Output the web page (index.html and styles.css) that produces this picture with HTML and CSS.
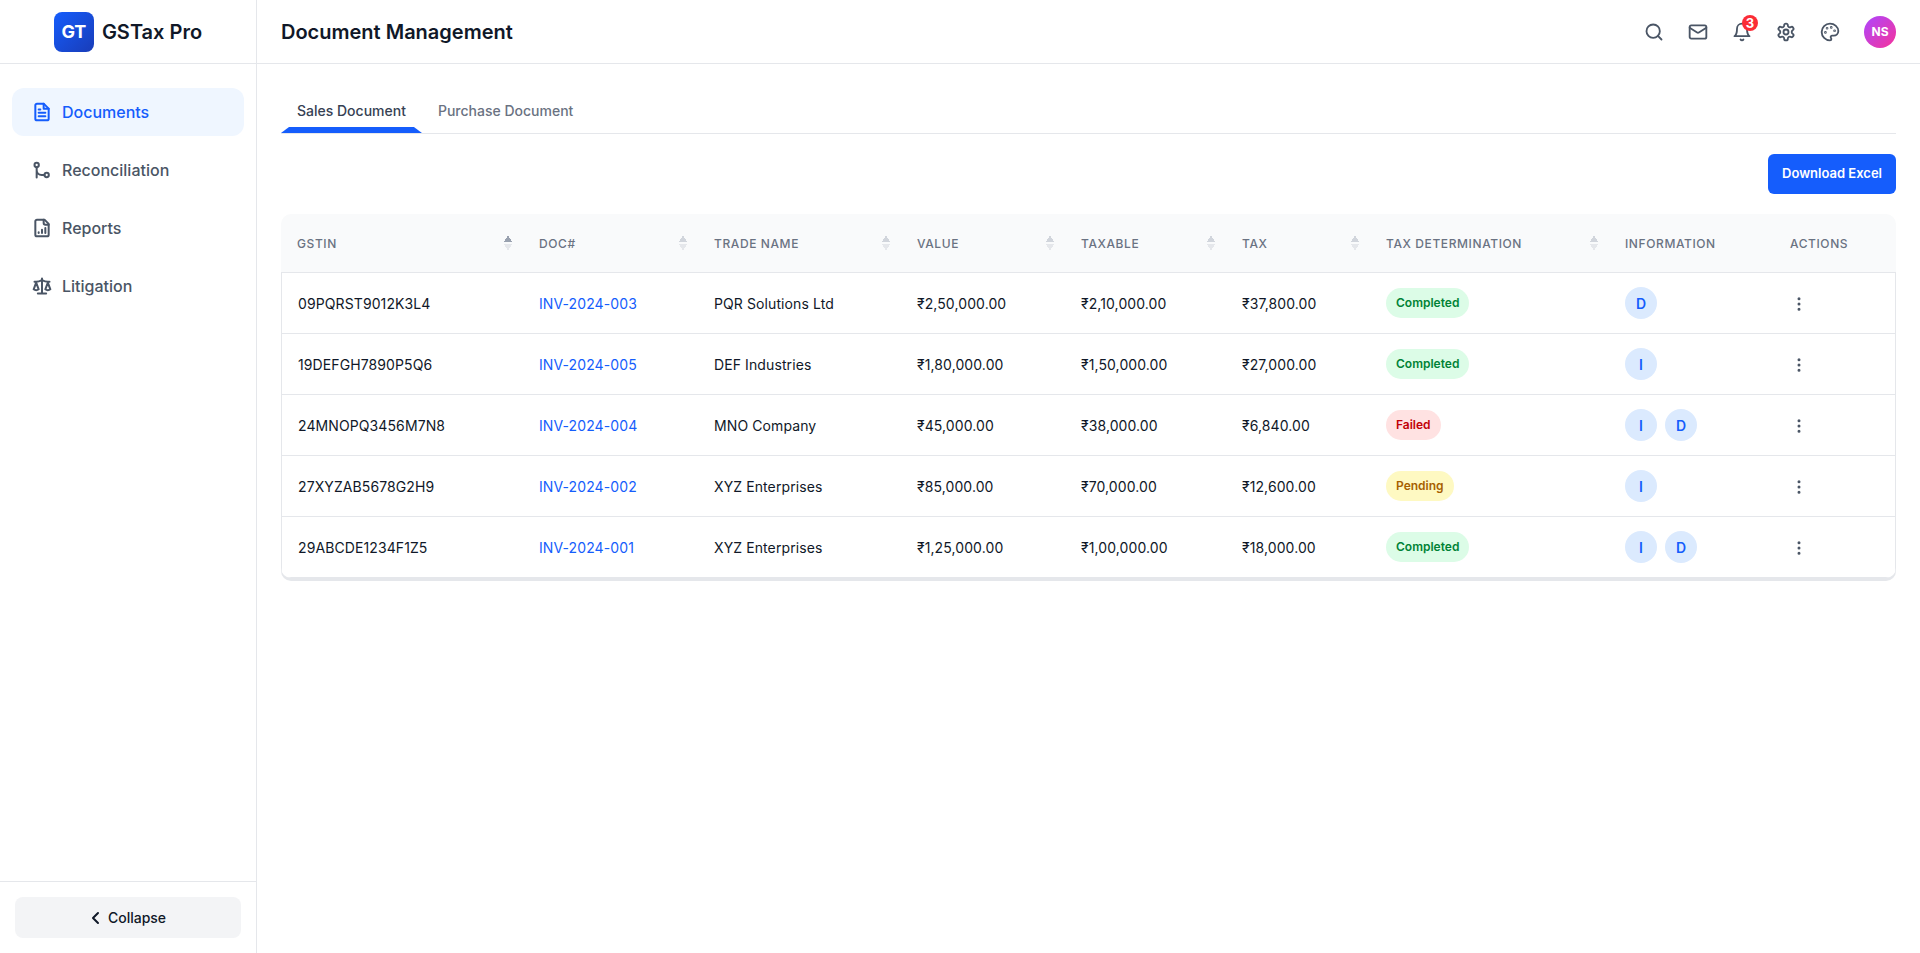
FILE: index.html
```html
<!DOCTYPE html>
<html>
<head>
  <title>GSTax Pro - Document Management</title>
  <link rel="stylesheet" href="styles.css">
</head>
<body>
  <div class="app">
    <aside class="sidebar">
      <div class="brand">
        <div class="brand-logo">GT</div>
        <span class="brand-name">GSTax Pro</span>
      </div>
      <nav class="nav">
        <a class="nav-item active">
          <svg class="nav-icon" viewBox="0 0 24 24"><path d="M14 2H6a2 2 0 0 0-2 2v16a2 2 0 0 0 2 2h12a2 2 0 0 0 2-2V8z"/><path d="M14 2v6h6"/><path d="M16 13H8M16 17H8M10 9H8"/></svg>
          Documents
        </a>
        <a class="nav-item">
          <svg class="nav-icon" viewBox="0 0 24 24"><circle cx="5.600" cy="6" r="2.600"/><circle cx="17.600" cy="18" r="2.600"/><path d="M5.600 8.600V21M5.600 12c0 3.500 2.500 6 6 6h3.400"/></svg>
          Reconciliation
        </a>
        <a class="nav-item">
          <svg class="nav-icon" viewBox="0 0 24 24"><path d="M15 2H6a2 2 0 0 0-2 2v16a2 2 0 0 0 2 2h12a2 2 0 0 0 2-2V7z"/><path d="M14 2v4a2 2 0 0 0 2 2h4"/><path d="M8 18v-1M12 18v-4M16 18v-6"/></svg>
          Reports
        </a>
        <a class="nav-item">
          <svg class="nav-icon" viewBox="0 0 24 24"><path d="m16 16 3-8 3 8c-.9.700-1.900 1-3 1s-2.100-.300-3-1z"/><path d="m2 16 3-8 3 8c-.9.700-1.900 1-3 1s-2.100-.300-3-1z"/><path d="M7 21h10M12 3v18M3 7h2c2 0 5-1 7-2 2 1 5 2 7 2h2"/></svg>
          Litigation
        </a>
      </nav>
      <div class="sidebar-foot">
        <button class="collapse-btn">
          <svg class="collapse-icon" viewBox="0 0 10 16"><path d="M8 3 3 8l5 5"/></svg>
          Collapse
        </button>
      </div>
    </aside>

    <div class="main">
      <header class="topbar">
        <h1>Document Management</h1>
        <div class="top-actions">
          <svg class="top-icon" viewBox="0 0 24 24"><circle cx="11" cy="11" r="8"/><path d="m21 21-4.300-4.300"/></svg>
          <svg class="top-icon" viewBox="0 0 24 24"><rect x="2" y="4" width="20" height="16" rx="2"/><path d="m22 7-8.970 5.700a1.940 1.940 0 0 1-2.060 0L2 7"/></svg>
          <span class="bell">
            <svg class="top-icon" viewBox="0 0 24 24"><path d="M6 8a6 6 0 0 1 12 0c0 7 3 9 3 9H3s3-2 3-9"/><path d="M10.300 21a1.940 1.940 0 0 0 3.400 0"/></svg>
            <span class="bell-count">3</span>
          </span>
          <svg class="top-icon" viewBox="0 0 24 24"><path d="M12.220 2h-.44a2 2 0 0 0-2 2v.18a2 2 0 0 1-1 1.730l-.43.25a2 2 0 0 1-2 0l-.15-.08a2 2 0 0 0-2.730.73l-.22.380a2 2 0 0 0 .730 2.730l.15.100a2 2 0 0 1 1 1.720v.510a2 2 0 0 1-1 1.740l-.15.090a2 2 0 0 0-.730 2.730l.22.380a2 2 0 0 0 2.730.730l.15-.08a2 2 0 0 1 2 0l.43.250a2 2 0 0 1 1 1.730V20a2 2 0 0 0 2 2h.44a2 2 0 0 0 2-2v-.18a2 2 0 0 1 1-1.730l.43-.25a2 2 0 0 1 2 0l.15.080a2 2 0 0 0 2.730-.730l.22-.390a2 2 0 0 0-.730-2.730l-.15-.080a2 2 0 0 1-1-1.740v-.500a2 2 0 0 1 1-1.740l.15-.090a2 2 0 0 0 .730-2.730l-.22-.380a2 2 0 0 0-2.730-.730l-.15.080a2 2 0 0 1-2 0l-.43-.250a2 2 0 0 1-1-1.730V4a2 2 0 0 0-2-2z"/><circle cx="12" cy="12" r="3"/></svg>
          <svg class="top-icon" viewBox="0 0 24 24"><circle class="dot" cx="13.500" cy="6.500" r=".5"/><circle class="dot" cx="17.500" cy="10.500" r=".5"/><circle class="dot" cx="8.500" cy="7.500" r=".5"/><circle class="dot" cx="6.500" cy="12.500" r=".5"/><path d="M12 2C6.500 2 2 6.500 2 12s4.500 10 10 10c.926 0 1.648-.746 1.648-1.688 0-.437-.18-.835-.437-1.125-.29-.289-.438-.652-.438-1.125a1.640 1.640 0 0 1 1.668-1.668h1.996c3.051 0 5.555-2.503 5.555-5.554C21.965 6.012 17.461 2 12 2z"/></svg>
          <div class="avatar">NS</div>
        </div>
      </header>

      <main class="content">
        <div class="tabs">
          <a class="tab active">Sales Document</a>
          <a class="tab">Purchase Document</a>
        </div>

        <div class="toolbar">
          <button class="btn-primary">Download Excel</button>
        </div>

        <div class="table-card">
          <table class="doc-table">
            <colgroup>
              <col class="col-gstin"><col class="col-doc"><col class="col-trade"><col class="col-value"><col class="col-taxable"><col class="col-tax"><col class="col-det"><col class="col-info"><col class="col-actions">
            </colgroup>
            <thead>
              <tr>
                <th><div class="th-inner">GSTIN<span class="sort asc"></span></div></th>
                <th><div class="th-inner">DOC#<span class="sort"></span></div></th>
                <th><div class="th-inner">TRADE NAME<span class="sort"></span></div></th>
                <th><div class="th-inner">VALUE<span class="sort"></span></div></th>
                <th><div class="th-inner">TAXABLE<span class="sort"></span></div></th>
                <th><div class="th-inner">TAX<span class="sort"></span></div></th>
                <th><div class="th-inner">TAX DETERMINATION<span class="sort"></span></div></th>
                <th>INFORMATION</th>
                <th>ACTIONS</th>
              </tr>
            </thead>
            <tbody id="doc-body"></tbody>
          </table>
        </div>
      </main>
    </div>
  </div>

  <script>
    var documentos = [
      { gstin: "09PQRST9012K3L4", doc: "INV-2024-003", nome: "PQR Solutions Ltd", valor: "₹2,50,000.00", taxable: "₹2,10,000.00", tax: "₹37,800.00", status: "Completed", info: ["D"] },
      { gstin: "19DEFGH7890P5Q6", doc: "INV-2024-005", nome: "DEF Industries", valor: "₹1,80,000.00", taxable: "₹1,50,000.00", tax: "₹27,000.00", status: "Completed", info: ["I"] },
      { gstin: "24MNOPQ3456M7N8", doc: "INV-2024-004", nome: "MNO Company", valor: "₹45,000.00", taxable: "₹38,000.00", tax: "₹6,840.00", status: "Failed", info: ["I", "D"] },
      { gstin: "27XYZAB5678G2H9", doc: "INV-2024-002", nome: "XYZ Enterprises", valor: "₹85,000.00", taxable: "₹70,000.00", tax: "₹12,600.00", status: "Pending", info: ["I"] },
      { gstin: "29ABCDE1234F1Z5", doc: "INV-2024-001", nome: "XYZ Enterprises", valor: "₹1,25,000.00", taxable: "₹1,00,000.00", tax: "₹18,000.00", status: "Completed", info: ["I", "D"] }
    ];

    var body = document.getElementById("doc-body");

    documentos.forEach(function(d) {
      var chips = d.info.map(function(i) {
        return '<span class="chip">' + i + '</span>';
      }).join("");
      var row = document.createElement("tr");
      row.innerHTML =
        "<td>" + d.gstin + "</td>" +
        '<td><a class="doc-link">' + d.doc + "</a></td>" +
        "<td>" + d.nome + "</td>" +
        "<td>" + d.valor + "</td>" +
        "<td>" + d.taxable + "</td>" +
        "<td>" + d.tax + "</td>" +
        '<td><span class="badge ' + d.status.toLowerCase() + '">' + d.status + "</span></td>" +
        '<td><div class="chips">' + chips + "</div></td>" +
        '<td><svg class="more" viewBox="0 0 24 24"><circle cx="12" cy="5" r="1"/><circle cx="12" cy="12" r="1"/><circle cx="12" cy="19" r="1"/></svg></td>';
      body.appendChild(row);
    });
  </script>
</body>
</html>
```

FILE: styles.css
```css
* {
  box-sizing: border-box;
}

body {
  margin: 0;
  font-family: Inter, "Noto Sans", sans-serif;
  background-color: #fff;
  color: #111827;
}

svg {
  fill: none;
  stroke: currentColor;
  stroke-width: 2;
  stroke-linecap: round;
  stroke-linejoin: round;
}

.app {
  display: flex;
  height: 953px;
  overflow: hidden;
}

/* Sidebar */
.sidebar {
  width: 257px;
  flex-shrink: 0;
  display: flex;
  flex-direction: column;
  border-right: 1px solid #e5e7eb;
}

.brand {
  height: 64px;
  display: flex;
  align-items: center;
  justify-content: center;
  gap: 8px;
  border-bottom: 1px solid #e5e7eb;
}

.brand-logo {
  width: 40px;
  height: 40px;
  border-radius: 8px;
  background: linear-gradient(135deg, #155dfc, #193cb8);
  color: #fff;
  font-size: 18px;
  font-weight: 700;
  display: flex;
  align-items: center;
  justify-content: center;
}

.brand-name {
  font-size: 20px;
  font-weight: 600;
  color: #101828;
}

.nav {
  flex: 1;
  padding: 24px 12px;
  display: flex;
  flex-direction: column;
  gap: 10px;
}

.nav-item {
  height: 48px;
  padding: 0 20px;
  display: flex;
  align-items: center;
  gap: 10px;
  border-radius: 12px;
  font-size: 16px;
  font-weight: 500;
  color: #4a5565;
}

.nav-item.active {
  background-color: #eff6ff;
  color: #155dfc;
}

.nav-icon {
  width: 20px;
  height: 20px;
  flex-shrink: 0;
  stroke-width: 2.4;
}

.sidebar-foot {
  padding: 15px;
  border-top: 1px solid #e5e7eb;
}

.collapse-btn {
  width: 100%;
  height: 41px;
  border: 0;
  border-radius: 8px;
  background-color: #f3f4f6;
  color: #101828;
  font-family: inherit;
  font-size: 14px;
  font-weight: 500;
  display: flex;
  align-items: center;
  justify-content: center;
  gap: 8px;
}

.collapse-icon {
  width: 10px;
  height: 16px;
}

/* Top bar */
.main {
  flex: 1;
  min-width: 0;
  display: flex;
  flex-direction: column;
}

.topbar {
  height: 64px;
  padding: 0 24px;
  display: flex;
  align-items: center;
  justify-content: space-between;
  border-bottom: 1px solid #e5e7eb;
}

.topbar h1 {
  margin: 0;
  font-size: 20px;
  font-weight: 600;
  color: #101828;
}

.top-actions {
  display: flex;
  align-items: center;
  gap: 24px;
  color: #4a5565;
}

.top-icon {
  width: 20px;
  height: 20px;
  display: block;
  stroke-width: 2.2;
}

.top-icon .dot {
  fill: currentColor;
}

.bell {
  position: relative;
}

.bell-count {
  position: absolute;
  top: -7px;
  right: -6px;
  width: 16px;
  height: 16px;
  border-radius: 50%;
  background-color: #fb2c36;
  color: #fff;
  font-size: 13px;
  font-weight: 700;
  line-height: 16px;
  text-align: center;
}

.avatar {
  width: 32px;
  height: 32px;
  border-radius: 50%;
  background: linear-gradient(135deg, #ad46ff, #f6339a);
  color: #fff;
  font-size: 12px;
  font-weight: 700;
  display: flex;
  align-items: center;
  justify-content: center;
}

/* Content */
.content {
  padding: 20px 24px;
}

.tabs {
  display: flex;
  height: 50px;
  border-bottom: 1px solid #e5e7eb;
}

.tab {
  position: relative;
  padding: 0 16px;
  font-size: 14px;
  font-weight: 500;
  line-height: 54px;
  color: #6a7282;
}

.tab.active {
  color: #364153;
}

.tab.active::after {
  content: "";
  position: absolute;
  left: 0;
  right: 0;
  bottom: 0;
  height: 6px;
  background-color: #155dfc;
  clip-path: polygon(8px 0, calc(100% - 8px) 0, 100% 100%, 0 100%);
}

.toolbar {
  display: flex;
  justify-content: flex-end;
  padding: 20px 0;
}

.btn-primary {
  height: 40px;
  padding: 0 14px 2px;
  border: 0;
  border-radius: 6px;
  background-color: #155dfc;
  color: #fff;
  font-family: inherit;
  font-size: 13px;
  font-weight: 600;
}

/* Table */
.table-card {
  border-radius: 10px;
  box-shadow: 0 3px 0 #e5e7eb;
  overflow: hidden;
}

.doc-table {
  width: 100%;
  table-layout: fixed;
  border-collapse: separate;
  border-spacing: 0;
  font-size: 14px;
  letter-spacing: 0.1px;
}

.col-gstin { width: 242px; }
.col-doc { width: 175px; }
.col-trade { width: 203px; }
.col-value { width: 164px; }
.col-taxable { width: 161px; }
.col-tax { width: 144px; }
.col-det { width: 239px; }
.col-info { width: 165px; }

.doc-table th {
  height: 59px;
  padding: 0 16px;
  background-color: #f9fafb;
  border-bottom: 1px solid #e5e7eb;
  font-size: 12px;
  font-weight: 500;
  letter-spacing: 0.6px;
  text-align: left;
  color: #6a7282;
}

.doc-table th:has(.th-inner) {
  padding-right: 11px;
}

.th-inner {
  display: flex;
  align-items: center;
  justify-content: space-between;
}

.sort {
  width: 8px;
  height: 16px;
  background:
    linear-gradient(to bottom right, transparent 50%, #d1d5dc 50%) left top / 4px 7px no-repeat,
    linear-gradient(to bottom left, transparent 50%, #d1d5dc 50%) right top / 4px 7px no-repeat,
    linear-gradient(to top right, transparent 50%, #e5e7eb 50%) left bottom / 4px 7px no-repeat,
    linear-gradient(to top left, transparent 50%, #e5e7eb 50%) right bottom / 4px 7px no-repeat;
}

.sort.asc {
  background:
    linear-gradient(to bottom right, transparent 50%, #99a1af 50%) left top / 4px 7px no-repeat,
    linear-gradient(to bottom left, transparent 50%, #99a1af 50%) right top / 4px 7px no-repeat,
    linear-gradient(to top right, transparent 50%, #e5e7eb 50%) left bottom / 4px 7px no-repeat,
    linear-gradient(to top left, transparent 50%, #e5e7eb 50%) right bottom / 4px 7px no-repeat;
}

.doc-table td {
  height: 61px;
  padding: 0 16px;
  border-bottom: 1px solid #e5e7eb;
  color: #101828;
}

.doc-table td:first-child {
  border-left: 1px solid #e5e7eb;
}

.doc-table td:last-child {
  border-right: 1px solid #e5e7eb;
}

.doc-link {
  color: #155dfc;
}

.badge {
  display: inline-block;
  height: 30px;
  padding: 0 10px;
  border-radius: 15px;
  font-size: 12px;
  font-weight: 600;
  letter-spacing: 0;
  line-height: 30px;
}

.badge.completed {
  background-color: #dcfce7;
  color: #008236;
}

.badge.failed {
  background-color: #ffe2e2;
  color: #c10007;
}

.badge.pending {
  background-color: #fef9c2;
  color: #a65f00;
}

.chips {
  display: flex;
  gap: 8px;
}

.chip {
  width: 32px;
  height: 32px;
  border-radius: 50%;
  background-color: #dbeafe;
  color: #155dfc;
  font-size: 14px;
  font-weight: 600;
  display: flex;
  align-items: center;
  justify-content: center;
}

.more {
  width: 18px;
  height: 18px;
  display: block;
  margin-top: 2px;
  color: #4a5565;
}
```
